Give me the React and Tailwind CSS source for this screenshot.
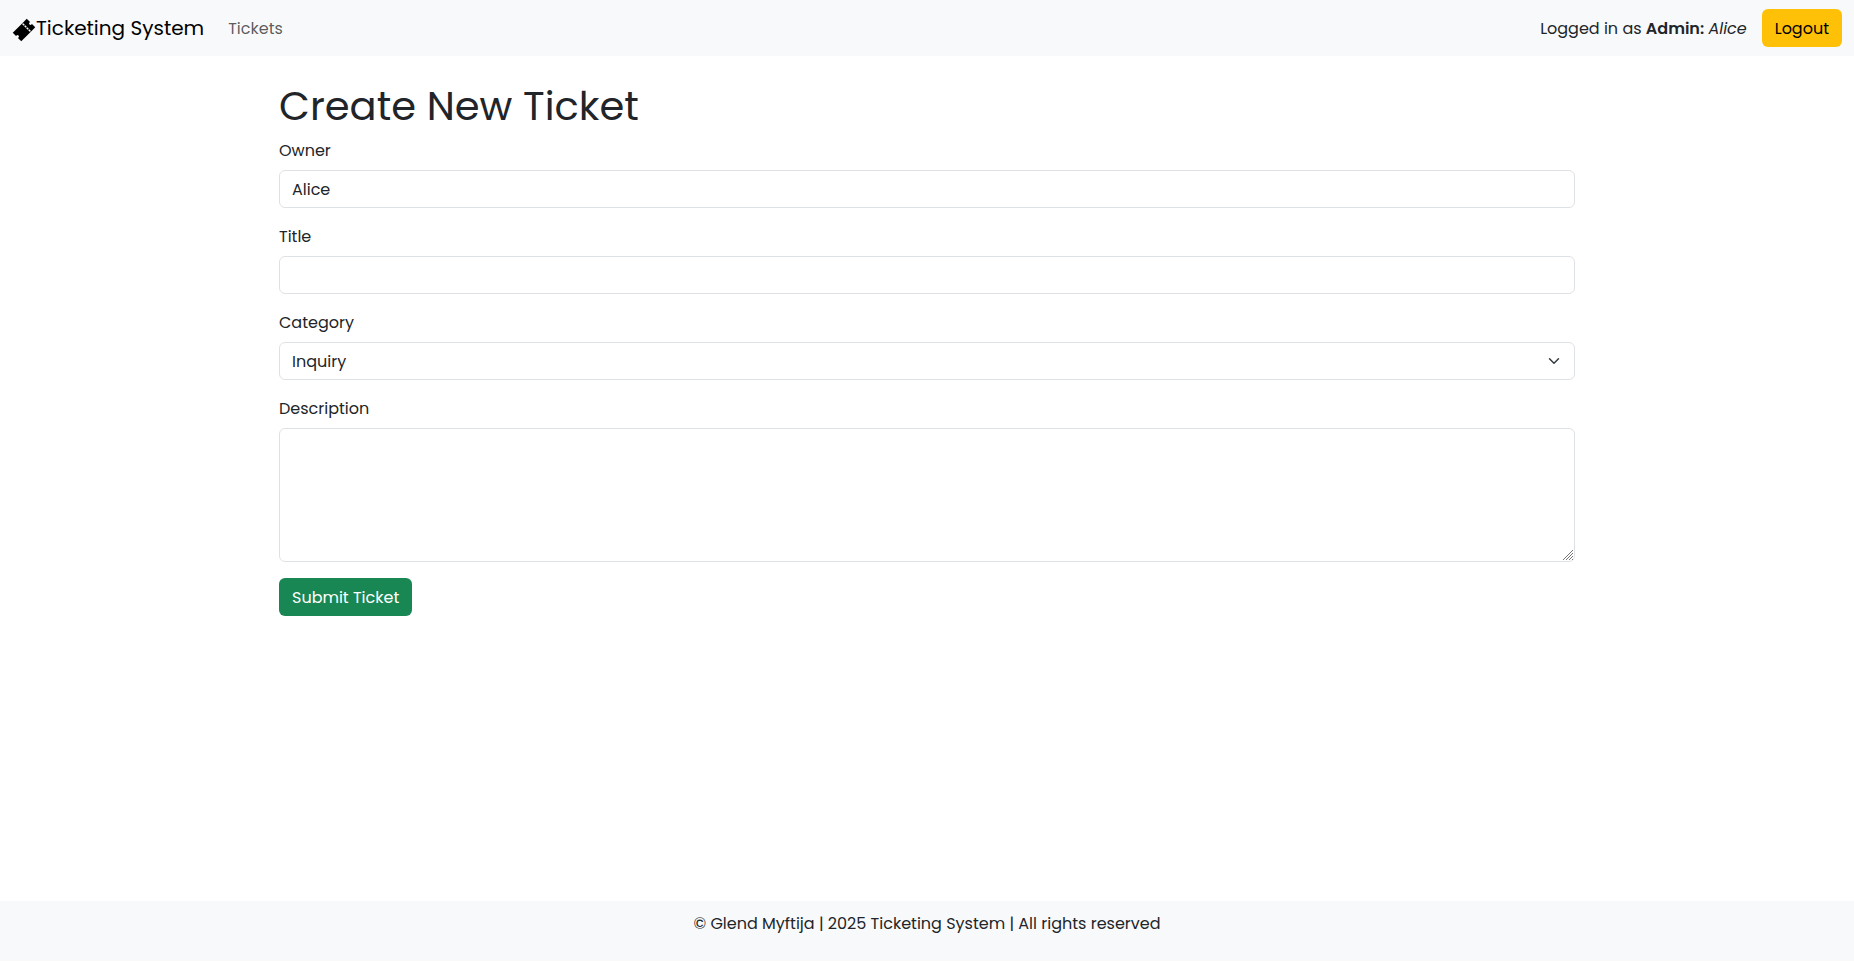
import { IoTicketSharp } from 'react-icons/io5';

const control =
  'block h-[38px] w-full appearance-none rounded-md border border-[#dee2e6] bg-white px-3 text-base text-[#212529] outline-none';

function Field({ label, id, children }) {
  return (
    <div className="pb-4">
      <label htmlFor={id} className="block h-8 w-fit pt-px leading-6">
        {label}
      </label>
      {children}
    </div>
  );
}

function Navbar() {
  return (
    <nav className="flex h-14 items-center justify-between bg-[#f8f9fa] px-3">
      <div className="flex items-center">
        <a href="#" className="flex items-center text-xl leading-[30px] text-black">
          <IoTicketSharp className="mt-1 size-6" />
          Ticketing System
        </a>
        <a href="#" className="ml-6 pt-0.5 text-black/65">Tickets</a>
      </div>
      <div className="flex items-center">
        <span className="mr-[15px] whitespace-nowrap pt-0.5">
          Logged in as <strong className="font-semibold">Admin:</strong> <em>Alice</em>
        </span>
        <button className="h-[38px] rounded-md bg-[#ffc107] px-[13px] pt-0.5 text-black">Logout</button>
      </div>
    </nav>
  );
}

export default function App() {
  return (
    <div className="flex h-screen flex-col bg-white font-[Poppins,Inter,sans-serif] text-base text-[#212529]">
      <Navbar />
      <main className="mx-auto w-[1296px] flex-1 pt-[26px]">
        <h1 className="mb-2 text-[40px] leading-[48px]">Create New Ticket</h1>
        <form>
          <Field label="Owner" id="owner">
            <input id="owner" className={`${control} py-1.5`} defaultValue="Alice" />
          </Field>
          <Field label="Title" id="title">
            <input id="title" className={`${control} py-1.5`} />
          </Field>
          <Field label="Category" id="category">
            <div className="relative">
              <select id="category" className={`${control} pt-[7px] pb-[5px]`} defaultValue="Inquiry">
                <option>Inquiry</option>
              </select>
              <svg
                className="pointer-events-none absolute right-[13px] top-[13px] h-3 w-4"
                viewBox="0 0 16 16"
                fill="none"
                stroke="#343a40"
                strokeWidth="2"
                strokeLinecap="round"
                strokeLinejoin="round"
              >
                <path d="m2 5 6 6 6-6" />
              </svg>
            </div>
          </Field>
          <Field label="Description" id="description">
            <div className="relative">
              <textarea
                id="description"
                className="block h-[134px] w-full resize-none rounded-md border border-[#dee2e6] bg-white px-3 py-1.5 outline-none"
              />
              <svg className="pointer-events-none absolute bottom-[2px] right-[2px] h-2.5 w-2.5" viewBox="0 0 10 10" fill="none" stroke="#777" strokeWidth="1">
                <path d="M0 10 10 0M3 10 10 3M6 10 10 6M9 10l1-1" />
              </svg>
            </div>
          </Field>
          <button type="button" className="h-[38px] rounded-md bg-[#198754] px-[13px] pt-0.5 text-white">
            Submit Ticket
          </button>
        </form>
      </main>
      <footer className="mb-0.5 h-[60px] bg-[#f8f9fa] pt-[11px] text-center leading-6">
        © Glend Myftija | 2025 Ticketing System | All rights reserved
      </footer>
    </div>
  );
}
